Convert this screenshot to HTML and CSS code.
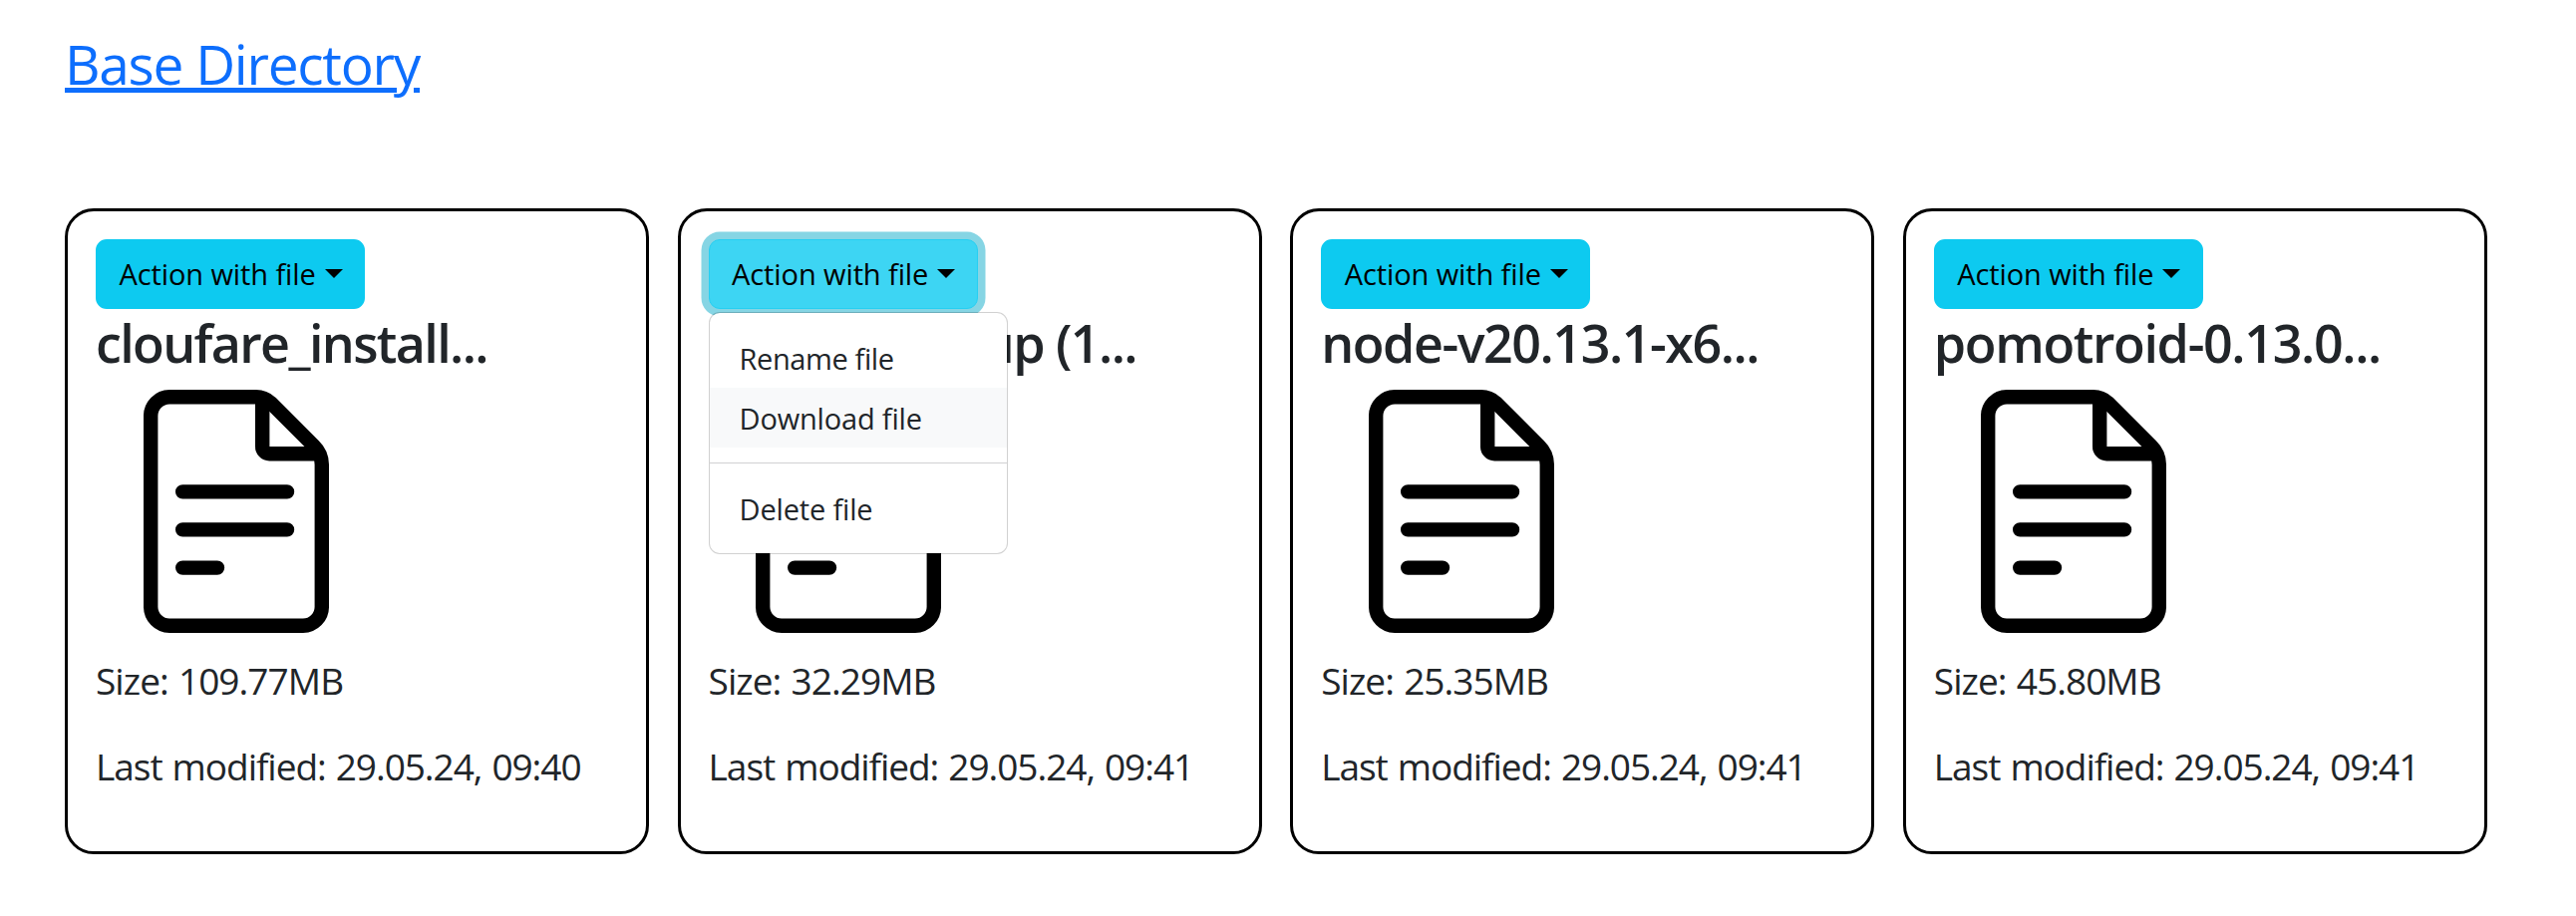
FILE: index.html
```html
<!DOCTYPE html>
<html lang="en">
<head>
<meta charset="utf-8">
<title>Base Directory</title>
<link rel="stylesheet" href="styles.css">
</head>
<body>
<svg class="sprite" aria-hidden="true">
  <symbol id="file" viewBox="0 0 186 244">
    <g fill="none" stroke="#000" stroke-width="14.4">
      <path d="M26 7.2H113Q121 7.2 127.500 13L170.500 56Q178.800 64 178.800 75V217.500A19 19 0 0 1 160 236.800H26A19 19 0 0 1 7.200 217.500V26.500A19 19 0 0 1 26 7.200Z"/>
      <path d="M119.200 8V57A7 7 0 0 0 126.200 64.200H176"/>
      <path stroke-linecap="round" d="M39.200 102.400H144M39.200 140.400H144M39.200 178.600H74"/>
    </g>
  </symbol>
</svg>
<header class="header"><a class="base-link" href="#">Base Directory</a></header>
<main class="files">
  <article class="card">
    <div class="dropdown"><button class="toggle">Action with file<i class="caret"></i></button></div>
    <h2 class="name name-cloufare">cloufare_install...</h2>
    <svg class="icon"><use href="#file"/></svg>
    <p class="size">Size: 109.77MB</p>
    <p class="modified">Last modified: 29.05.24, 09:40</p>
  </article>
  <article class="card">
    <div class="dropdown">
      <button class="toggle active">Action with file<i class="caret"></i></button>
      <div class="menu">
        <a class="item rename">Rename file</a>
        <a class="item hover">Download file</a>
        <hr class="divider">
        <a class="item">Delete file</a>
      </div>
    </div>
    <h2 class="name name-setup">Discord-setup (1...</h2>
    <svg class="icon"><use href="#file"/></svg>
    <p class="size">Size: 32.29MB</p>
    <p class="modified">Last modified: 29.05.24, 09:41</p>
  </article>
  <article class="card">
    <div class="dropdown"><button class="toggle">Action with file<i class="caret"></i></button></div>
    <h2 class="name">node-v20.13.1-x6...</h2>
    <svg class="icon"><use href="#file"/></svg>
    <p class="size">Size: 25.35MB</p>
    <p class="modified">Last modified: 29.05.24, 09:41</p>
  </article>
  <article class="card">
    <div class="dropdown"><button class="toggle">Action with file<i class="caret"></i></button></div>
    <h2 class="name name-pomotroid">pomotroid-0.13.0...</h2>
    <svg class="icon"><use href="#file"/></svg>
    <p class="size">Size: 45.80MB</p>
    <p class="modified">Last modified: 29.05.24, 09:41</p>
  </article>
</main>
</body>
</html>
```
FILE: styles.css
```css
* { box-sizing: border-box; }
body {
  margin: 0;
  padding: 31px 65px 0;
  background: #fff;
  color: #212529;
  font-family: "Segoe UI", "Open Sans", "Noto Sans", sans-serif;
}
.sprite { display: none; }
.header { height: 66px; margin-bottom: 112px; }
.base-link {
  display: inline-block;
  color: #0d6efd;
  font-size: 55px;
  line-height: 66px;
  letter-spacing: -1.26px;
  text-decoration: underline;
  text-decoration-thickness: 5px;
  text-underline-offset: 3px;
}
.files {
  display: grid;
  grid-template-columns: repeat(4, 586px);
  column-gap: 28.6px;
}
.card {
  height: 648px;
  padding: 28px;
  border: 3px solid #000;
  border-radius: 29px;
}
.dropdown { position: relative; width: 270px; height: 70px; }
.toggle {
  display: flex;
  align-items: center;
  width: 270px;
  height: 70px;
  padding: 0 0 0 21.5px;
  border: 2px solid #0dcaf0;
  border-radius: 11px;
  background: #0dcaf0;
  color: #000;
  font: 400 29px/66px "Segoe UI", "Open Sans", "Noto Sans", sans-serif;
  letter-spacing: -0.1px;
  white-space: nowrap;
}
.toggle.active {
  border: 1px solid #25cff2;
  padding-left: 22.5px;
  background: #3dd5f3;
  box-shadow: 0 0 0 7.5px #86d5e4;
}
.caret {
  margin: 0 0 1px 9px;
  border: 9px solid transparent;
  border-top-color: #000;
  border-bottom: 0;
}
.menu {
  position: absolute;
  top: 73px;
  left: 0;
  z-index: 2;
  width: 300px;
  padding: 15px 0;
  border: 1px solid rgba(0, 0, 0, 0.18);
  border-radius: 11px;
  background: #fff;
  background-clip: padding-box;
}
.item {
  display: block;
  height: 60px;
  padding-left: 30px;
  font-size: 29px;
  line-height: 62px;
  letter-spacing: -0.18px;
}
.item.rename { letter-spacing: -0.4px; }
.item.hover { background: #f8f9fa; }
.divider { height: 1px; margin: 15px 0; border: 0; background: #d0d1d2; }
.name {
  margin: 2px 0 16px;
  font-size: 52px;
  font-weight: 600;
  line-height: 63px;
  letter-spacing: -1.46px;
  white-space: nowrap;
}
.name-cloufare { letter-spacing: -1.63px; }
.name-setup { padding-left: 9px; letter-spacing: -1.6px; }
.name-pomotroid { letter-spacing: -1.36px; }
.icon { display: block; width: 186px; height: 244px; margin-left: 47.5px; }
.size, .modified {
  margin: 20px 0 0;
  font-size: 37px;
  line-height: 56px;
  letter-spacing: -0.94px;
  word-spacing: 1.5px;
  white-space: nowrap;
}
.modified { margin-top: 30px; letter-spacing: -1.04px; }
```
